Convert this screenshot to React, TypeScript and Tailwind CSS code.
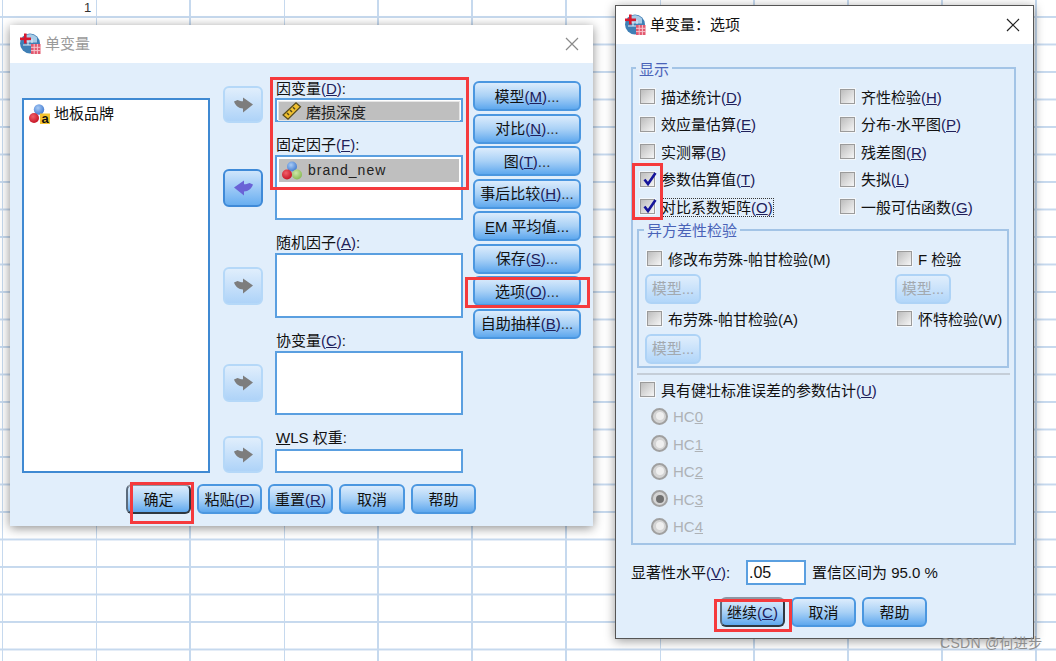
import type { ReactNode } from 'react';

const FONT = 'font-["Liberation_Sans","Noto_Sans_CJK_SC",sans-serif]';

function Key({ k, dots }: { k: string; dots?: boolean }) {
  return (
    <span className="text-[#20205a]">
      (<u>{k}</u>){dots && <span className="text-[#333]">...</span>}
    </span>
  );
}

function AppIcon() {
  return (
    <svg width="22" height="22" viewBox="0 0 22 22" className="shrink-0">
      <circle cx="10" cy="10.500" r="10" fill="#3f7fb5" />
      <path d="M4 3.500a9 9 0 0 1 13 1v5H4z" fill="#a9cbe6" />
      <path d="M8 8v4M12 6v4M3 12h9" stroke="#e3eef7" strokeWidth="1" />
      <rect x="0" y="4.500" width="11" height="2.600" fill="#d8192e" />
      <rect x="4" y="0.500" width="2.600" height="10" fill="#d8192e" />
      <rect x="11" y="11" width="9.500" height="10" fill="#e2596f" />
      <path d="M11 14.300h9.500M11 17.600h9.500M14.200 11v10M17.400 11v10" stroke="#f7c5cd" strokeWidth="1" />
    </svg>
  );
}

function CloseX({ color }: { color: string }) {
  return (
    <svg width="14" height="14" viewBox="0 0 14 14">
      <path d="M1 1l12 12M13 1L1 13" stroke={color} strokeWidth="1.200" />
    </svg>
  );
}

function BallDefs() {
  return (
    <defs>
      <radialGradient id="ball-blue" cx="40%" cy="35%" r="70%">
        <stop offset="0%" stopColor="#a8cbf5" />
        <stop offset="100%" stopColor="#3f78cf" />
      </radialGradient>
      <radialGradient id="ball-red" cx="40%" cy="35%" r="70%">
        <stop offset="0%" stopColor="#f0606a" />
        <stop offset="100%" stopColor="#c40f20" />
      </radialGradient>
      <radialGradient id="ball-green" cx="40%" cy="35%" r="70%">
        <stop offset="0%" stopColor="#cfe6a8" />
        <stop offset="100%" stopColor="#84b84e" />
      </radialGradient>
    </defs>
  );
}

function Balls() {
  return (
    <svg width="20" height="20" viewBox="0 0 20 20" className="shrink-0">
      <BallDefs />
      <circle cx="10" cy="5.500" r="5" fill="url(#ball-blue)" />
      <circle cx="5" cy="13.500" r="5" fill="url(#ball-red)" />
      <circle cx="15" cy="13.500" r="5" fill="url(#ball-green)" />
    </svg>
  );
}

function StringVarIcon() {
  return (
    <svg width="21" height="20" viewBox="0 0 21 20" className="shrink-0">
      <BallDefs />
      <circle cx="10" cy="5.500" r="5.200" fill="url(#ball-blue)" />
      <circle cx="5" cy="14" r="5" fill="url(#ball-red)" />
      <rect x="11" y="9.500" width="10" height="10.500" fill="#f4c430" />
      <text x="16" y="18.500" textAnchor="middle" fontSize="13" fontWeight="700" fontFamily="Liberation Sans" fill="#111">a</text>
    </svg>
  );
}

function RulerIcon() {
  return (
    <svg width="20" height="18" viewBox="0 0 20 18" className="shrink-0">
      <path d="M1 13L14 0.800l4.500 4L6 17.200z" fill="#f0c030" stroke="#55491c" strokeWidth="1.200" />
      <path d="M5 11l2 2M8 8l2 2M11 5.300l2 2" stroke="#55491c" strokeWidth="1.500" />
    </svg>
  );
}

function Arrow({ back }: { back?: boolean }) {
  return (
    <svg width="19" height="16" viewBox="0 0 19 16" className={back ? '-scale-x-100' : ''}>
      <path
        d="M0 4.500L3.500 3c2 1 3.500 1.300 5.500 1.300V0.500L19 7.500 9 15.500v-4C4.500 11.500 1.500 8.500 0 4.500z"
        fill={back ? '#6a62d6' : '#7d7d7d'}
      />
    </svg>
  );
}

function ArrowBtn({ className, active }: { className: string; active?: boolean }) {
  return (
    <div
      className={`w-10 flex items-center justify-center rounded-[6px] border-2 bg-gradient-to-b ${
        active ? 'border-[#3f8ad8] from-[#cfe5fb] to-[#68aef0]' : 'border-[#b5d8f8] from-[#e0eefc] to-[#aed3f8]'
      } ${className}`}
    >
      <Arrow back={active} />
    </div>
  );
}

function Btn({ children, className = 'w-full' }: { children: ReactNode; className?: string }) {
  return (
    <button className={`h-[30px] shrink-0 rounded-[6px] border-2 border-[#4b97e0] bg-gradient-to-b from-[#dcecfc] via-[#a9d1f6] to-[#5ea8ee] text-[15px] leading-none text-[#111] whitespace-nowrap ${className}`}>
      {children}
    </button>
  );
}

function DefaultBtn({ children }: { children: ReactNode }) {
  return (
    <button className="h-[30px] w-[65px] shrink-0 rounded-[6px] border-2 border-[#2f3841] border-t-[#8d97a3] border-l-[#5b6b7c] bg-gradient-to-b from-[#dcecfc] via-[#a9d1f6] to-[#5ea8ee] text-[15px] leading-none text-[#111] whitespace-nowrap">
      {children}
    </button>
  );
}

function ModelBtn() {
  return (
    <button className="h-[30px] w-14 -ml-px rounded-[6px] border-2 border-[#aed3f6] bg-gradient-to-b from-[#e0eefc] to-[#b2d6f9] text-[15px] leading-none text-[#a3a9af] whitespace-nowrap">
      模型...
    </button>
  );
}

function Check({ on }: { on?: boolean }) {
  return (
    <span className="relative flex h-[17px] w-[17px] shrink-0 items-center justify-center border border-[#f4f8fc] bg-white">
      <span className="h-[15px] w-[15px] border border-[#9b9b9b] bg-gradient-to-br from-[#bdbdbd] to-[#f6f6f6]" />
      {on && (
        <svg width="16" height="16" viewBox="0 0 16 16" className="absolute left-0.5 -top-px">
          <path d="M2.500 8.500l3.500 4.500L13.500 2" fill="none" stroke="#15159a" strokeWidth="2.600" />
        </svg>
      )}
    </span>
  );
}

function CheckRow({ label, on }: { label: ReactNode; on?: boolean }) {
  return (
    <div className="flex items-center gap-[5px] text-[15px] leading-[18px] text-[#111] whitespace-nowrap">
      <Check on={on} />
      <span className="translate-y-px">{label}</span>
    </div>
  );
}

function Radio({ n, on }: { n: string; on?: boolean }) {
  return (
    <div className="flex h-[27.5px] items-center gap-[5px] pl-3 text-[15px] text-[#aeb2b6]">
      <span className="flex h-[17px] w-[17px] items-center justify-center rounded-full border-2 border-[#a0a0a0] bg-[#d4d4d4]">
        <span className={`h-2 w-2 rounded-full ${on ? 'bg-[#707070]' : 'bg-[#efefef]'}`} />
      </span>
      <span className="translate-y-px">
        HC<u>{n}</u>
      </span>
    </div>
  );
}

function FieldLabel({ children, className }: { children: ReactNode; className: string }) {
  return <div className={`h-[18px] text-[15px] leading-[18px] text-[#111] whitespace-nowrap ${className}`}>{children}</div>;
}

function Field({ className, children }: { className: string; children?: ReactNode }) {
  return <div className={`border-2 border-[#5a9fe0] bg-white ${className}`}>{children}</div>;
}

// main dialog on the left
function UnivariateDialog() {
  return (
    <div className="absolute left-[10px] top-[25px] h-[501px] w-[583px] bg-[#e1eefb] shadow-[0_2px_10px_rgba(0,0,0,0.45)]">
      <div className="flex h-[38px] items-center gap-[3px] bg-white pl-[10px] pr-[14px] text-[15px] text-[#9a9a9a]">
        <AppIcon />
        <span className="flex-1">单变量</span>
        <CloseX color="#8a8a8a" />
      </div>

      <div className="flex items-start pl-3">
        <div className="mt-[35px] h-[375px] w-[188px] border-2 border-[#3f89d2] bg-white p-[3px] text-[15px] text-[#111]">
          <div className="flex items-center gap-[4px] pl-[2px]">
            <StringVarIcon />
            <span>地板品牌</span>
          </div>
        </div>

        <div className="ml-[13px] flex flex-col">
          <ArrowBtn className="mt-[23px] h-[37px]" />
          <ArrowBtn className="mt-[46px] h-[38px]" active />
          <ArrowBtn className="mt-[60px] h-[38px]" />
          <ArrowBtn className="mt-[59px] h-[38px]" />
          <ArrowBtn className="mt-[34px] h-[37px]" />
        </div>

        <div className="ml-3 flex w-[188px] flex-col">
          <FieldLabel className="mt-[17px] ml-px">因变量<Key k="D" />:</FieldLabel>
          <Field className="h-6 p-px">
            <div className="flex h-5 items-center gap-1 border border-[#e6e6e6] bg-[#bfbfbf] pl-[3px] text-[15px] text-[#222]">
              <RulerIcon />
              <span className="translate-y-[2px]">磨损深度</span>
            </div>
          </Field>
          <FieldLabel className="mt-[14px] mb-px ml-px">固定因子<Key k="F" />:</FieldLabel>
          <Field className="h-[65px] p-[2px]">
            <div className="flex h-[23px] items-center gap-[6px] bg-[#bfbfbf] pl-[3px] text-[14px] tracking-[1px] text-[#222]">
              <Balls />
              <span>brand_new</span>
            </div>
          </Field>
          <FieldLabel className="mt-[14px] mb-px ml-px">随机因子<Key k="A" />:</FieldLabel>
          <Field className="h-[65px]" />
          <FieldLabel className="mt-[14px] mb-px ml-px">协变量<Key k="C" />:</FieldLabel>
          <Field className="h-16" />
          <FieldLabel className="mt-[14px] mb-[2px] ml-px"><u>W</u>LS 权重:</FieldLabel>
          <Field className="h-6" />
        </div>

        <div className="ml-[10px] mt-[18px] flex w-[108px] flex-col gap-[2.5px]">
          <Btn>模型<Key k="M" dots /></Btn>
          <Btn>对比<Key k="N" dots /></Btn>
          <Btn>图<Key k="T" dots /></Btn>
          <Btn>事后比较<Key k="H" dots /></Btn>
          <Btn><u>E</u>M 平均值...</Btn>
          <Btn>保存<Key k="S" dots /></Btn>
          <Btn>选项<Key k="O" dots /></Btn>
          <Btn>自助抽样<Key k="B" dots /></Btn>
        </div>
      </div>

      <div className="ml-[116px] mt-[11px] flex gap-[6px]">
        <DefaultBtn>确定</DefaultBtn>
        <Btn className="w-[65px]">粘贴<Key k="P" /></Btn>
        <Btn className="w-[65px]">重置<Key k="R" /></Btn>
        <Btn className="w-[66px]">取消</Btn>
        <Btn className="w-[65px]">帮助</Btn>
      </div>
    </div>
  );
}

// options dialog on the right
function OptionsDialog() {
  return (
    <div className="absolute left-[615px] top-[5px] h-[634px] w-[419px] border border-[#555] bg-[#e1eefb] shadow-[0_2px_10px_rgba(0,0,0,0.4)]">
      <div className="flex h-[38px] items-center gap-[3px] bg-white pl-[9px] pr-[13px] text-[15px] text-[#111]">
        <AppIcon />
        <span className="flex-1">单变量：选项</span>
        <CloseX color="#222" />
      </div>

      <div className="relative ml-[15px] mt-[23px] h-[478px] w-[385px] border-2 border-[#a3c4e6]">
        <span className="absolute -top-[8px] left-[3px] bg-[#e1eefb] px-[3px] text-[15px] leading-[18px] text-[#4a63b8]">显示</span>

        <div className="grid grid-cols-[200px_1fr] auto-rows-[27.5px] items-center pl-[6px] pt-[14px]">
          <CheckRow label={<>描述统计<Key k="D" /></>} />
          <CheckRow label={<>齐性检验<Key k="H" /></>} />
          <CheckRow label={<>效应量估算<Key k="E" /></>} />
          <CheckRow label={<>分布-水平图<Key k="P" /></>} />
          <CheckRow label={<>实测幂<Key k="B" /></>} />
          <CheckRow label={<>残差图<Key k="R" /></>} />
          <CheckRow on label={<>参数估算值<Key k="T" /></>} />
          <CheckRow label={<>失拟<Key k="L" /></>} />
          <CheckRow on label={<span className="outline-1 outline-dotted outline-[#333]">对比系数矩阵<Key k="O" /></span>} />
          <CheckRow label={<>一般可估函数<Key k="G" /></>} />
        </div>

        <div className="relative ml-[4px] mt-[8px] h-[139px] w-[372px] border-2 border-[#a3c4e6] pl-[7px] pt-[19px]">
          <span className="absolute -top-[9px] left-[5px] bg-[#e1eefb] px-[3px] text-[15px] leading-[18px] text-[#4a63b8]">异方差性检验</span>
          <div className="grid grid-cols-[250px_1fr]">
            <div className="flex flex-col">
              <CheckRow label="修改布劳殊-帕甘检验(M)" />
              <div className="mt-[6px]"><ModelBtn /></div>
              <div className="mt-[6px]"><CheckRow label="布劳殊-帕甘检验(A)" /></div>
              <div className="mt-[6px]"><ModelBtn /></div>
            </div>
            <div className="flex flex-col">
              <CheckRow label="F 检验" />
              <div className="mt-[6px]"><ModelBtn /></div>
              <div className="mt-[6px]"><CheckRow label="怀特检验(W)" /></div>
            </div>
          </div>
        </div>

        <div className="ml-[4px] mt-[5px] h-[2px] w-[373px] bg-[#c5ced8]" />

        <div className="ml-[6px] mt-[6px]">
          <CheckRow label={<>具有健壮标准误差的参数估计<Key k="U" /></>} />
        </div>

        <div className="mt-[4px] flex flex-col pl-[6px]">
          <Radio n="0" />
          <Radio n="1" />
          <Radio n="2" />
          <Radio n="3" on />
          <Radio n="4" />
        </div>
      </div>

      <div className="ml-[15px] mt-[15px] flex h-[25px] items-center text-[15px] text-[#111]">
        <span className="w-[115px] translate-y-px">显著性水平<Key k="V" />:</span>
        <div className="flex h-[25px] w-[60px] items-center border-2 border-[#5a9fe0] bg-white pl-[1px] text-[16px]">.05</div>
        <span className="ml-[6px] translate-y-px">置信区间为 95.0 %</span>
      </div>

      <div className="ml-[104px] mt-3 flex gap-[6px]">
        <DefaultBtn>继续<Key k="C" /></DefaultBtn>
        <Btn className="w-[65px]">取消</Btn>
        <Btn className="w-[65px]">帮助</Btn>
      </div>
    </div>
  );
}

export default function App() {
  return (
    <div className={`relative h-[661px] w-[1056px] overflow-hidden bg-white bg-[linear-gradient(to_right,#c6d9ee_2px,transparent_2px),linear-gradient(to_bottom,#c6d9ee_2px,transparent_2px)] bg-[size:94px_27.5px] bg-[position:1px_16px] ${FONT}`}>
      <span className="absolute left-[84px] top-[2px] text-[13px] leading-[12px] text-[#333]">1</span>

      <UnivariateDialog />
      <OptionsDialog />

      {/* red annotation boxes */}
      <div className="absolute left-[270px] top-[77px] h-[113px] w-[199px] border-[3px] border-[#f53a3d]" />
      <div className="absolute left-[465px] top-[277px] h-[31px] w-[125px] border-[3px] border-[#f53a3d]" />
      <div className="absolute left-[130px] top-[482px] h-[42px] w-[64px] border-[3px] border-[#f53a3d]" />
      <div className="absolute left-[632px] top-[163px] h-[57px] w-[31px] border-[3px] border-[#f53a3d]" />
      <div className="absolute left-[714px] top-[599px] h-[33px] w-[78px] border-[3px] border-[#f53a3d]" />

      <span className="absolute left-[940px] top-[634px] text-[14px] leading-[18px] tracking-[0.3px] text-[#8f8f8f]">CSDN @何进步</span>
    </div>
  );
}
